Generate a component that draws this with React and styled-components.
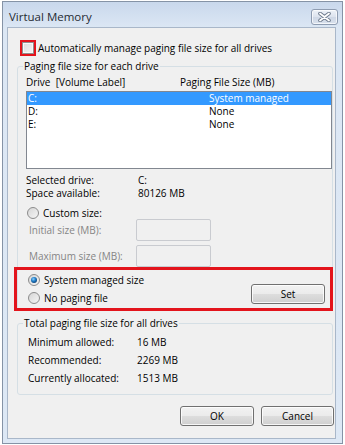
import React from 'react'
import styled, { createGlobalStyle } from 'styled-components'

const GlobalStyle = createGlobalStyle`
    * { box-sizing: border-box; }
    body {
        margin: 0;
        background: #ffffff;
        font-family: "Open Sans", "Noto Sans", sans-serif;
        font-size: 10px;
        color: #000;
    }
`

const Window = styled.div`
    margin: 1px 0 0 2px;
    width: 341px;
    height: 443px;
    border: 1px solid #8593a6;
    background: linear-gradient(to bottom, #c9d8ec 0px, #dce7f4 26px, #dde8f5 100%);
    display: flex;
    flex-direction: column;
`

const TitleBar = styled.div`
    height: 25px;
    display: flex;
    align-items: flex-start;
    justify-content: space-between;
    padding: 0 4px 0 6px;
`

const Title = styled.div`
    font-size: 11.5px;
    line-height: 14px;
    margin-top: 8px;
    color: #262b33;
`

const CloseButton = styled.div`
    margin-top: 7px;
    width: 27px;
    height: 16px;
    border: 1px solid #8e9cb1;
    border-radius: 3px;
    background: linear-gradient(to bottom, #eef2f8 0%, #dce3ee 50%, #cfd8e6 51%, #d9e1ed 100%);
    box-shadow: inset 0 0 0 1px rgba(255, 255, 255, 0.7);
    display: flex;
    align-items: center;
    justify-content: center;
`

const Content = styled.div`
    flex: 1;
    margin: 0 6px 4px 4px;
    border: 1px solid #a9b7c9;
    background: #f0f0f0;
    display: flex;
    flex-direction: column;
`

const CheckRow = styled.div`
    display: flex;
    align-items: center;
    height: 16px;
    margin: 12px 0 0 12px;
    line-height: 13px;
`

const Highlight = styled.div`
    border: ${p => p.thick ? 3 : 2}px solid #e3141c;
`

const CheckBox = styled.div`
    width: 12px;
    height: 12px;
    border: 1px solid #8f8f8f;
    background: linear-gradient(135deg, #dcdcdc 0%, #f4f4f4 100%);
    box-shadow: inset 0 0 0 1px #f8f8f8;
`

const Label = styled.span`
    margin-left: ${p => p.gap || 0}px;
    color: ${p => p.disabled ? '#858585' : '#000'};
    white-space: nowrap;
`

const Group = styled.div`
    width: 316px;
    margin: ${p => p.top}px 0 0 9px;
    border: 1px solid #d5dfe5;
    border-radius: 3px;
    padding: 0 1px ${p => p.bottom || 0}px ${p => p.left}px;
`

const GroupCaption = styled.div`
    width: fit-content;
    margin: -7px 0 0 ${p => 5 - p.left}px;
    padding: 0 1px;
    line-height: 13px;
    background: #f0f0f0;
`

const HeaderRow = styled.div`
    display: grid;
    grid-template-columns: 154px 1fr;
    line-height: 13px;
    margin-top: 3px;
    white-space: pre;
`

const ListBox = styled.div`
    margin-top: 2px;
    width: 306px;
    height: 78px;
    border: 1px solid #828790;
    background: #fff;
`

const ListRow = styled.div`
    display: grid;
    grid-template-columns: 181px 1fr;
    height: 13px;
    line-height: 13px;
    padding-left: 1px;
    background: ${p => p.selected ? '#3399ff' : 'transparent'};
    color: ${p => p.selected ? '#fff' : '#000'};
`

const InfoTable = styled.div`
    margin-top: ${p => p.top}px;
    display: grid;
    grid-template-columns: ${p => p.col}px 1fr;
    grid-auto-rows: ${p => p.row}px;
    align-items: center;
    line-height: 13px;
`

const RadioRow = styled.div`
    display: flex;
    align-items: center;
    height: 12px;
    margin-top: ${p => p.top || 0}px;
    padding-left: 1px;
    line-height: 13px;
`

const FieldRow = styled.div`
    display: grid;
    grid-template-columns: 107px 75px;
    align-items: center;
    height: 22px;
    margin-top: ${p => p.top || 0}px;
    padding-left: 3px;
    line-height: 13px;
`

const TextBox = styled.div`
    height: 22px;
    border: 1px solid #c9cbd0;
    border-radius: 2px;
    background: #f0f0f0;
`

const SizeChoice = styled(Highlight)`
    margin: 0 -2px -2px -12px;
    display: flex;
    justify-content: space-between;
    padding: 4px 5px 4px 10px;
`

const RadioColumn = styled.div`
    display: flex;
    flex-direction: column;
    gap: 6px;
`

const Button = styled.div`
    width: ${p => p.w}px;
    height: 20px;
    align-self: flex-end;
    border: 1px solid #707070;
    border-radius: 3px;
    background: linear-gradient(to bottom, #f2f2f2 0%, #ebebeb 48%, #dddddd 52%, #cfcfcf 100%);
    box-shadow: inset 0 0 0 1px rgba(255, 255, 255, 0.8);
    display: flex;
    align-items: center;
    justify-content: center;
    line-height: 13px;
`

const ButtonBar = styled.div`
    display: flex;
    justify-content: flex-end;
    gap: 7px;
    margin-top: 11px;
    padding-right: 1px;
`

const Radio = ({ checked }) => (
    <svg width="12" height="12" viewBox="0 0 12 12">
        <defs>
            <linearGradient id="rfill" x1="0" y1="0" x2="1" y2="1">
                <stop offset="0" stopColor="#d4d4d4" />
                <stop offset="1" stopColor="#f7f7f7" />
            </linearGradient>
            <radialGradient id="rdot" cx="0.4" cy="0.35" r="0.7">
                <stop offset="0" stopColor="#8fd0ff" />
                <stop offset="0.5" stopColor="#1f7ec8" />
                <stop offset="1" stopColor="#0d3f74" />
            </radialGradient>
        </defs>
        <circle cx="6" cy="6" r="5.5" fill="url(#rfill)" stroke="#8c8c8c" strokeWidth="1" />
        {checked && <circle cx="6" cy="6" r="3" fill="url(#rdot)" />}
    </svg>
)

const CloseIcon = () => (
    <svg width="13" height="10" viewBox="0 0 13 10">
        <path d="M2 1.5 L11 8.5 M11 1.5 L2 8.5" stroke="#6d7a8c" strokeWidth="3.6" strokeLinecap="round" />
        <path d="M2 1.5 L11 8.5 M11 1.5 L2 8.5" stroke="#ffffff" strokeWidth="1.8" strokeLinecap="round" />
    </svg>
)

const drives = [
    { name: 'C:', size: 'System managed' },
    { name: 'D:', size: 'None' },
    { name: 'E:', size: 'None' },
]

export default function App() {
    return (
        <>
            <GlobalStyle />
            <Window>
                <TitleBar>
                    <Title>Virtual Memory</Title>
                    <CloseButton><CloseIcon /></CloseButton>
                </TitleBar>
                <Content>
                    <CheckRow>
                        <Highlight><CheckBox /></Highlight>
                        <Label gap={2}>Automatically manage paging file size for all drives</Label>
                    </CheckRow>

                    <Group top={10} left={8}>
                        <GroupCaption left={8}>Paging file size for each drive</GroupCaption>
                        <HeaderRow>
                            <span>Drive  [Volume Label]</span>
                            <span>Paging File Size (MB)</span>
                        </HeaderRow>
                        <ListBox>
                            {drives.map((d, i) => (
                                <ListRow key={d.name} selected={i === 0}>
                                    <span>{d.name}</span>
                                    <span>{d.size}</span>
                                </ListRow>
                            ))}
                        </ListBox>
                        <InfoTable top={5} col={112} row={13}>
                            <span>Selected drive:</span>
                            <span>C:</span>
                            <span>Space available:</span>
                            <span>80126 MB</span>
                        </InfoTable>
                        <RadioRow top={7}>
                            <Radio />
                            <Label gap={4}>Custom size:</Label>
                        </RadioRow>
                        <FieldRow>
                            <Label disabled>Initial size (MB):</Label>
                            <TextBox />
                        </FieldRow>
                        <FieldRow top={4}>
                            <Label disabled>Maximum size (MB):</Label>
                            <TextBox />
                        </FieldRow>
                        <SizeChoice thick>
                            <RadioColumn>
                                <RadioRow>
                                    <Radio checked />
                                    <Label gap={4}>System managed size</Label>
                                </RadioRow>
                                <RadioRow>
                                    <Radio />
                                    <Label gap={4}>No paging file</Label>
                                </RadioRow>
                            </RadioColumn>
                            <Button w={74}>Set</Button>
                        </SizeChoice>
                    </Group>

                    <Group top={13} left={10} bottom={7}>
                        <GroupCaption left={10}>Total paging file size for all drives</GroupCaption>
                        <InfoTable top={3} col={109} row={18}>
                            <span>Minimum allowed:</span>
                            <span>16 MB</span>
                            <span>Recommended:</span>
                            <span>2269 MB</span>
                            <span>Currently allocated:</span>
                            <span>1513 MB</span>
                        </InfoTable>
                    </Group>

                    <ButtonBar>
                        <Button w={74}>OK</Button>
                        <Button w={73}>Cancel</Button>
                    </ButtonBar>
                </Content>
            </Window>
        </>
    )
}
